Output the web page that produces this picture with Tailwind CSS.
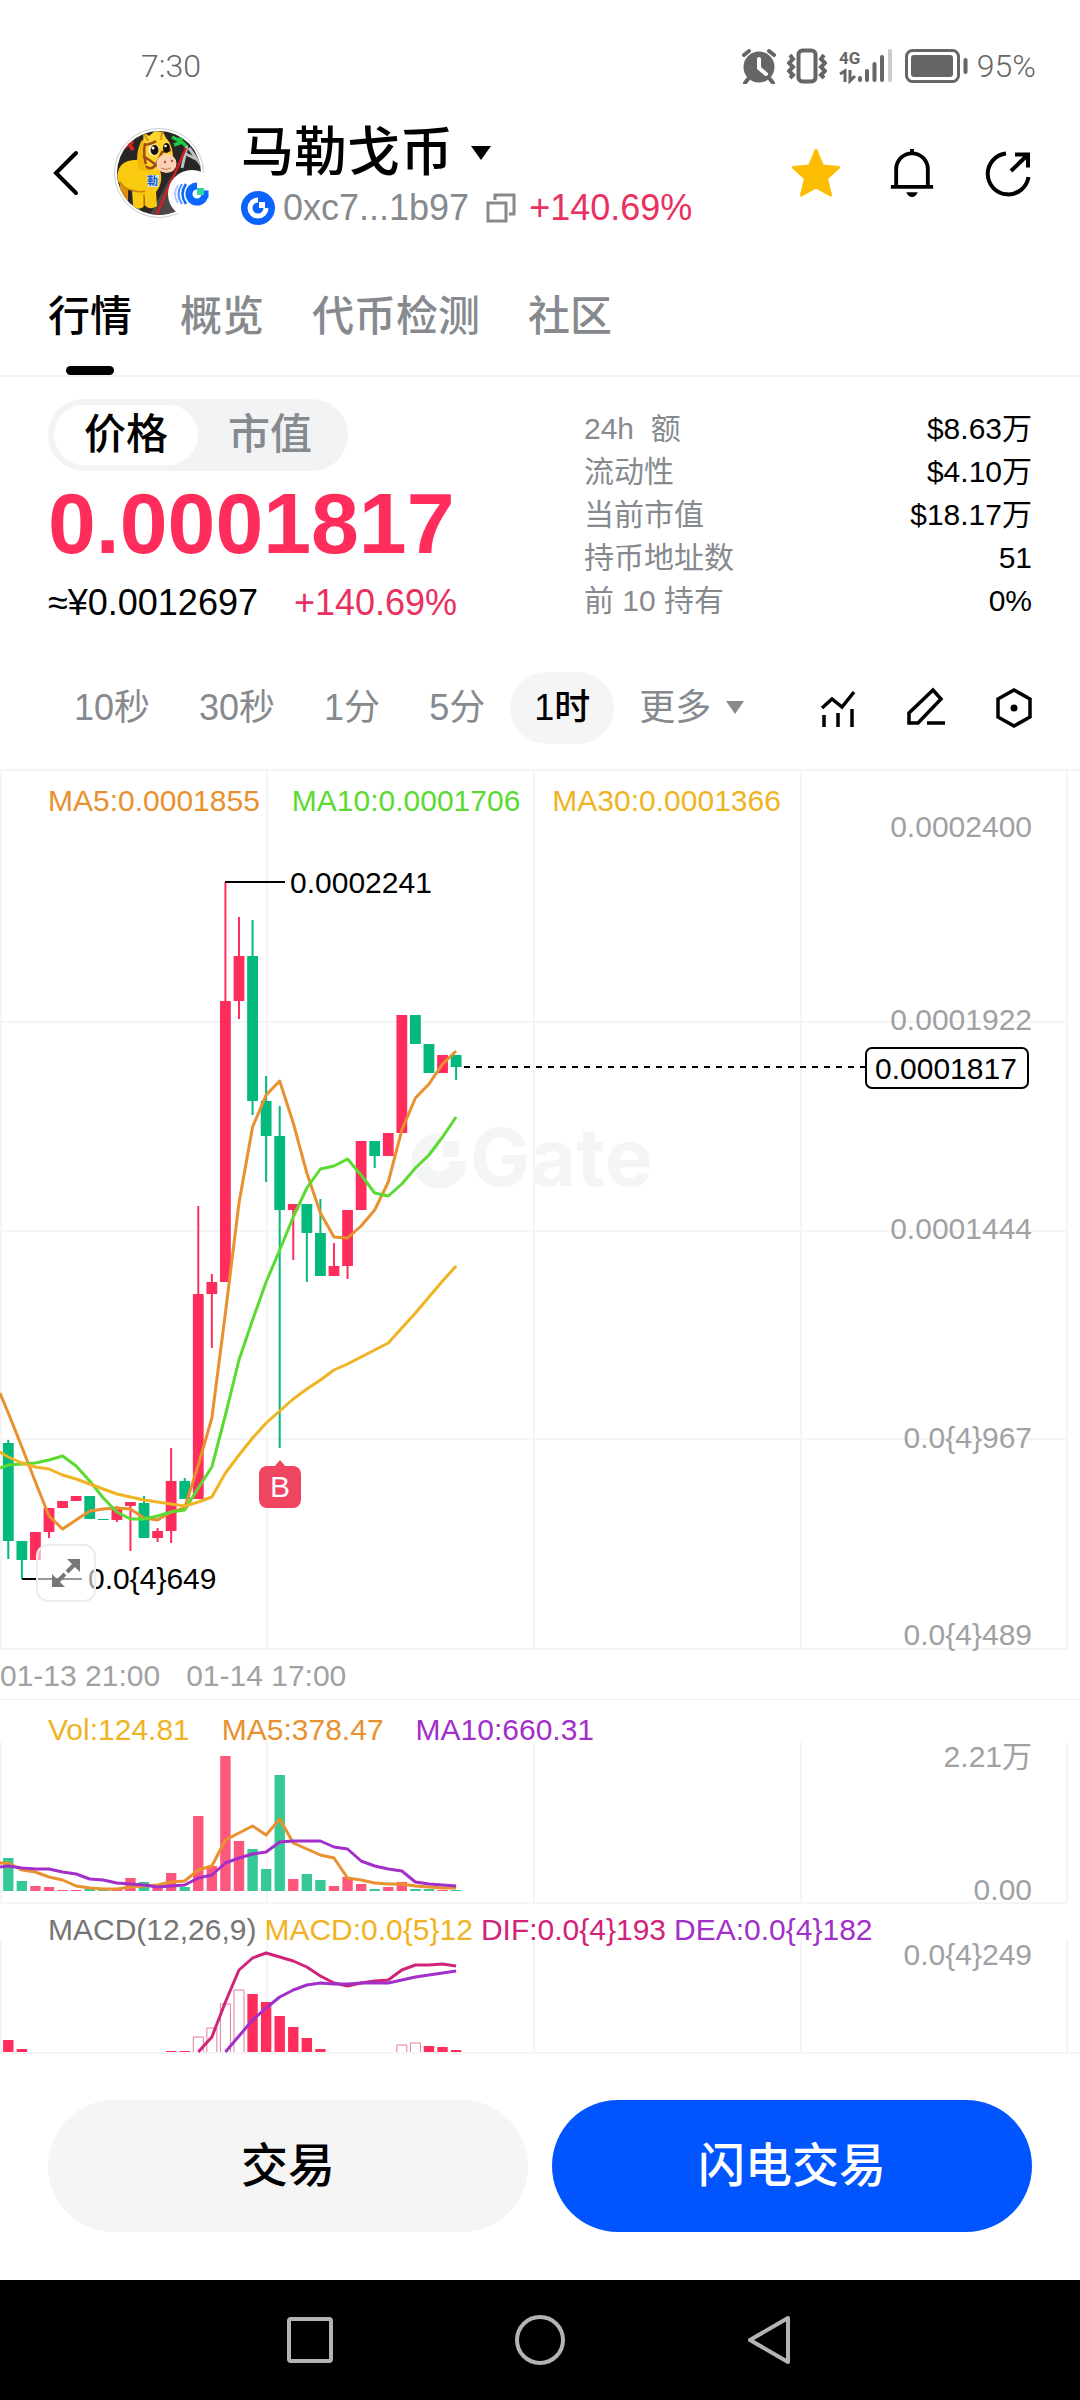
<!DOCTYPE html>
<html lang="zh-CN">

<head>
    <meta charset="UTF-8">
    <meta name="viewport" content="width=device-width, initial-scale=1.0">
    <title>马勒戈币 - 行情</title>
    <script src="https://cdn.jsdelivr.net/npm/@tailwindcss/browser@4"></script>
    <style>
        body {
            font-family: "Liberation Sans", "Noto Sans CJK SC", sans-serif;
        }
    </style>
</head>

<body class="bg-white text-black">
    <!-- Barra de estado -->
    <div class="flex h-[120px] items-center justify-between pt-3 pl-[141px] pr-11 text-[32px] font-light text-[#666] font-[Roboto]">
        <span>7:30</span>
        <div class="flex items-center">
            <svg class="h-9 w-9" viewBox="0 0 36 36" fill="none" stroke="#666" aria-hidden="true">
                <circle cx="18" cy="19" r="15.500" fill="#666" stroke="none" />
                <path d="M3 7l5-4M33 7l-5-4M7 31l-3 4M29 31l3 4" stroke-width="4" stroke-linecap="round" />
                <path d="M18 11v9l7 6" stroke="#fff" stroke-width="4" stroke-linecap="round" />
            </svg>
            <svg class="ml-2.5 h-9 w-10" viewBox="0 0 40 36" fill="none" stroke="#666" aria-hidden="true">
                <rect x="11.500" y="2.500" width="17" height="31" rx="4" stroke-width="4" />
                <path d="M3 7l3 4-4 4 4 4-4 4 4 4-3 3M37 7l-3 4 4 4-4 4 4 4-4 4 3 3" stroke-width="4" />
            </svg>
            <svg class="ml-3 h-9 w-[54px] overflow-visible" viewBox="0 0 54 36" aria-hidden="true">
                <text x="0" y="16" font-size="17" font-weight="700" fill="#666">4G</text>
                <path d="M1 26l5-3v11M11 22v11l5-5" fill="none" stroke="#666" stroke-width="3" />
                <g stroke="#666" stroke-width="4" stroke-linecap="round">
                    <path d="M21 30v2M28 23v9M35.500 16v16M43 9v23" />
                    <path d="M51 3v29" stroke="#ccc" />
                </g>
            </svg>
            <svg class="ml-3 h-9 w-16" viewBox="0 0 64 36" fill="none" stroke="#666" aria-hidden="true">
                <rect x="1.500" y="2.500" width="52" height="31" rx="6" stroke-width="3" />
                <rect x="6" y="7" width="42" height="22" rx="3" fill="#666" stroke="none" />
                <path d="M60.500 12v12" stroke-width="4" stroke-linecap="round" />
            </svg>
            <span class="ml-2">95%</span>
        </div>
    </div>

    <!-- Cabecera del token -->
    <header class="flex h-[110px] items-center px-12 pb-1">
        <button class="w-[66px]" aria-label="返回">
            <svg class="h-12 w-8" viewBox="0 0 32 48" fill="none" stroke="#000" stroke-width="4" stroke-linecap="round"><path d="M28 4L8 24l20 20" /></svg>
        </button>
        <svg class="h-24 w-24 shrink-0" viewBox="0 0 96 90" role="img" aria-label="马勒戈币">
            <defs><clipPath id="face"><circle cx="45" cy="45" r="42" /></clipPath></defs>
            <circle cx="45" cy="45" r="44.500" fill="#fff" stroke="#ccc" stroke-width="1" />
            <g clip-path="url(#face)">
                <rect width="96" height="90" fill="#2a2626" />
                <path d="M34 90L56 50l40-10v50z" fill="#4c4847" />
                <path d="M10 19l9-6M13 12l6 10" stroke="#d82626" stroke-width="4" fill="none" />
                <path d="M58 9l6 3 8-4M60 17l8-3 5 5" stroke="#20c840" stroke-width="3.500" fill="none" />
                <path d="M73 18l-5 22M75 20l13 18M72 26l12 6" fill="none" stroke="#b9c0c6" stroke-width="3" />
                <path d="M72 20L42 88" stroke="#d32020" stroke-width="2.500" />
                <path d="M8 54q-9 10-3 24l9 1V60z" fill="#dd8f12" />
                <path d="M4 44c2-10 12-13 24-12l18 10c3 10 0 17-4 22l1 14c-4 3-10 3-12-1v-8h-1v9c-3 4-9 3-11 0l-1-16C8 60 1 54 4 44z" fill="#f9ca10" />
                <path d="M30 78V66M17 62q8 3 14 1M6 54q5 8 12 8" stroke="#c9820e" stroke-width="1.500" fill="none" />
                <path d="M28 12c-5 8-7 22-2 30l10 2 4-26z" fill="#f0b90c" />
                <path d="M29 17c0-5 1-8 0-13l6 4 6-5 8 1 3 6c5 5 7 12 7 20l-7 10c-7 5-18 3-21-4z" fill="#fdd52c" />
                <path d="M29 4l5 9M48 4l-1 8" stroke="#d6930f" stroke-width="2" fill="none" />
                <path d="M30 17q8-1 12-4M31 15q-2 12 1 21M29 28q7 4 13 9l6-13 9-2M42 37q-6 6-10 1" stroke="#9c4c15" stroke-width="2.500" fill="none" />
                <ellipse cx="52.500" cy="35.500" rx="10" ry="9.500" fill="#fbd0b4" />
                <circle cx="51" cy="34" r="1.200" fill="#a6533b" /><circle cx="58" cy="33" r="1.200" fill="#a6533b" />
                <path d="M47 40q5 3 10 0" stroke="#c77a5e" fill="none" />
                <ellipse cx="40" cy="22" rx="5" ry="5.500" fill="#fff" /><ellipse cx="40.500" cy="22" rx="4" ry="5" fill="#181010" /><circle cx="39" cy="20" r="1.500" fill="#fff" />
                <ellipse cx="52.500" cy="20" rx="3.500" ry="5" fill="#181010" /><circle cx="51.500" cy="18" r="1.300" fill="#fff" />
                <path d="M33 47h12l-1 12H34z" fill="#cfe4f7" />
                <text x="33" y="57" font-size="11" font-weight="700" fill="#1459c9">勒</text>
            </g>
            <circle cx="78" cy="66" r="24" fill="#fff" />
            <path d="M83 58a8 8 0 1 0 8 8h3.500" fill="none" stroke="#0a66ff" stroke-width="7" />
            <rect x="83" y="60" width="7" height="7" fill="#2fd8a0" />
            <path d="M72 56q-7 10 0 20" fill="none" stroke="#0a66ff" stroke-width="2.500" />
            <path d="M68 56q-7 10 0 20" fill="none" stroke="#4b8eff" stroke-width="2" />
            <path d="M64 57q-6 9 0 18" fill="none" stroke="#a9c9ff" stroke-width="2" />
        </svg>
        <div class="ml-[31px] pt-2">
            <h1>
                <button class="flex items-center gap-4 text-[53px] leading-[62px] font-medium">
                    马勒戈币
                    <svg class="h-4 w-6" viewBox="0 0 24 16" aria-hidden="true"><path d="M2 1h20L12 15z" /></svg>
                </button>
            </h1>
            <div class="flex h-12 items-center text-[36px]">
                <svg class="h-[34px] w-[34px]" viewBox="0 0 34 34" aria-hidden="true">
                    <circle cx="17" cy="17" r="17" fill="#0a62ff" />
                    <path d="M17 9a8 8 0 1 0 8 8" fill="none" stroke="#fff" stroke-width="5" />
                    <rect x="18" y="11" width="6" height="6" fill="#fff" />
                </svg>
                <span class="ml-2 text-[#868a8e]">0xc7...1b97</span>
                <button class="ml-4" aria-label="复制">
                    <svg class="h-8 w-8" viewBox="0 0 32 32" fill="none" stroke="#868a8e" stroke-width="3"><path d="M3 11h18v18H3zM10 8V3h19v19h-5" /></svg>
                </button>
                <span class="ml-3 text-[#e9315f]">+140.69%</span>
            </div>
        </div>
        <div class="ml-auto flex gap-12">
            <button aria-label="收藏">
                <svg class="h-12 w-12" viewBox="0 0 48 48" fill="#fdbd02" stroke="#fdbd02" stroke-width="3" stroke-linejoin="round"><path d="M24 1.500l6.500 15.500 16 1.500-12 11 4 16.500L24 38 9.500 46l4-16.500-12-11 16-1.500z" /></svg>
            </button>
            <button aria-label="提醒">
                <svg class="h-12 w-12" viewBox="0 0 48 50" fill="none" stroke="#000" stroke-width="4"><path d="M24 0v5M7.500 39V21a16.500 16.500 0 0 1 33 0v18M2 39.500h44" /><path d="M18 45h12q-2 5-6 5t-6-5z" fill="#000" stroke="none" /></svg>
            </button>
            <button aria-label="分享">
                <svg class="h-12 w-12" viewBox="0 0 48 48" fill="none" stroke="#000" stroke-width="4"><path d="M22 4.500A20.500 20.500 0 1 0 44.500 28M31 5.500h13v13M43 6.500L27 22" /></svg>
            </button>
        </div>
    </header>

    <nav class="flex gap-12 border-b-2 border-[#f5f5f6] px-12 pt-[57px] text-[42px] leading-[60px] font-medium text-[#868a8e]">
        <a href="#" class="flex flex-col items-center text-black">行情<span class="mt-[19px] h-[9px] w-12 rounded-full bg-black"></span></a>
        <a href="#">概览</a>
        <a href="#">代币检测</a>
        <a href="#">社区</a>
    </nav>

    <main>
        <section class="flex items-start justify-between px-12 pt-[22px]">
            <div>
                <div class="inline-flex rounded-full bg-[#f2f3f5] p-1.5 text-[42px] leading-[60px] font-medium">
                    <button class="rounded-full bg-white px-[30px]">价格</button>
                    <button class="px-[30px] text-[#868a8e]">市值</button>
                </div>
                <p class="mt-1.5 text-[86px] leading-[92px] font-bold text-[#ff2d5c]">0.0001817</p>
                <p class="mt-3 flex gap-9 text-[36px] leading-[44px]"><span>≈¥0.0012697</span><span class="text-[#e9315f]">+140.69%</span></p>
            </div>
            <dl class="mt-2 grid w-[448px] grid-cols-[1fr_auto] text-[30px] leading-[43px]">
                <dt class="text-[#868a8e]">24h&nbsp; 额</dt><dd class="text-right">$8.63万</dd>
                <dt class="text-[#868a8e]">流动性</dt><dd class="text-right">$4.10万</dd>
                <dt class="text-[#868a8e]">当前市值</dt><dd class="text-right">$18.17万</dd>
                <dt class="text-[#868a8e]">持币地址数</dt><dd class="text-right">51</dd>
                <dt class="text-[#868a8e]">前 10 持有</dt><dd class="text-right">0%</dd>
            </dl>
        </section>

        <div class="mt-[47px] flex h-[72px] items-center gap-px pr-12 pl-[50px] text-[36px] text-[#868a8e]">
            <button class="h-full px-6">10秒</button>
            <button class="h-full px-6">30秒</button>
            <button class="h-full px-6">1分</button>
            <button class="h-full px-6">5分</button>
            <button class="h-full rounded-full bg-[#f5f5f5] px-6 font-medium text-black">1时</button>
            <button class="flex h-full items-center gap-3.5 pl-6">
                更多
                <svg class="h-3.5 w-5" viewBox="0 0 20 14" fill="#868a8e" aria-hidden="true"><path d="M1 0h18l-9 13z" /></svg>
            </button>
            <div class="ml-auto flex gap-[52px] text-black">
                <button aria-label="指标">
                    <svg class="h-10 w-9" viewBox="2 0 36 40" fill="none" stroke="#000" stroke-width="3.500"><path d="M4 20l10-9 10 8L36 4M6 27v12M20 25v14M34 21v18" /></svg>
                </button>
                <button aria-label="画线">
                    <svg class="h-10 w-9 overflow-visible" viewBox="2 0 36 40" fill="none" stroke="#000" stroke-width="3.500"><path d="M3 35V25L27 2l8 9-23 24zM21 35h18" /></svg>
                </button>
                <button aria-label="设置">
                    <svg class="h-10 w-9" viewBox="2 0 36 40" fill="none" stroke="#000" stroke-width="3.500"><path d="M20 2l16 9v18l-16 9-16-9V11z" /><circle cx="20" cy="20" r="3.500" fill="#000" stroke="none" /></svg>
                </button>
            </div>
        </div>

        <!-- Velas -->
        <div class="relative mt-[25px] text-[30px]">
            <svg class="h-auto w-full overflow-visible" viewBox="0 0 1080 881">
                <path d="M0 1H1080M0 253H1067M0 462H1067M0 670H1067M0 880H1067M1 1V880M267 1V880M534 1V880M801 1V880M1067 1V880" stroke="#f5f5f6" stroke-width="2" />
                <g fill="#f3f5f6">
                    <path d="M439 373a19 19 0 1 0 19 19" fill="none" stroke="#f3f5f6" stroke-width="17" />
                    <rect x="443" y="372" width="16" height="16" />
                    <text x="470" y="417" font-size="80" font-weight="700" font-family="Inter">Gate</text>
                </g>
                <g id="candles"></g>
                <path d="M225 113H285M22 810H82" stroke="#000" stroke-width="2" />
                <path d="M464 298H865" stroke="#000" stroke-width="2" stroke-dasharray="6 6" />
                <text x="290" y="124">0.0002241</text>
                <text x="88" y="820">0.0{4}649</text>
                <g fill="#9fa1a4" text-anchor="end">
                    <text x="1032" y="68">0.0002400</text>
                    <text x="1032" y="261">0.0001922</text>
                    <text x="1032" y="470">0.0001444</text>
                    <text x="1032" y="679">0.0{4}967</text>
                    <text x="1032" y="876">0.0{4}489</text>
                </g>
                <rect x="866" y="279" width="162" height="40" rx="6" fill="#fff" stroke="#000" stroke-width="2" />
                <text x="875" y="310">0.0001817</text>
                <path d="M274 698l6-7 6 7z" fill="#ef4560" />
                <rect x="259" y="697" width="42" height="42" rx="8" fill="#ef4560" />
                <text x="280" y="728" font-size="30" fill="#fff" text-anchor="middle">B</text>
            </svg>
            <div class="absolute top-4 left-12 flex gap-8 leading-8">
                <span class="text-[#e8912e]">MA5:0.0001855</span>
                <span class="text-[#5bda32]">MA10:0.0001706</span>
                <span class="text-[#f0b323]">MA30:0.0001366</span>
            </div>
            <button class="absolute bottom-12 left-9 flex h-[58px] w-[60px] items-center justify-center rounded-xl border-2 border-[#ededed] bg-white/60" aria-label="全屏">
                <svg class="h-7 w-7" viewBox="0 0 28 28" fill="#777" stroke="#777" stroke-width="4"><path d="M15 13l7-7M6 22l7-7" /><path d="M15 0h13v13zM0 15v13h13z" stroke="none" /></svg>
            </button>
        </div>
        <div class="flex h-[50px] items-center gap-[26px] border-b border-[#f0f0f1] pt-0.5 text-[30px] text-[#9fa1a4]">
            <span>01-13 21:00</span>
            <span>01-14 17:00</span>
        </div>

        <!-- Volumen -->
        <div class="relative text-[30px]">
            <svg class="h-auto w-full overflow-visible" viewBox="0 0 1080 204">
                <path d="M0 203H1067M1 42V203M267 42V203M534 42V203M801 42V203M1067 42V203" stroke="#f5f5f6" stroke-width="2" />
                <g id="volume"></g>
                <g fill="#9fa1a4" text-anchor="end">
                    <text x="1032" y="67">2.21万</text>
                    <text x="1032" y="200">0.00</text>
                </g>
            </svg>
            <div class="absolute top-3.5 left-12 flex gap-8 leading-8">
                <span class="text-[#f0b323]">Vol:124.81</span>
                <span class="text-[#e8912e]">MA5:378.47</span>
                <span class="text-[#a22fc9]">MA10:660.31</span>
            </div>
        </div>

        <!-- MACD -->
        <div class="relative text-[30px]">
            <svg class="h-auto w-full" viewBox="0 0 1080 150">
                <path d="M0 149H1080M1 36V149M267 36V149M534 36V149M801 36V149M1067 36V149" stroke="#f5f5f6" stroke-width="2" />
                <g id="macd"></g>
                <text x="1032" y="61" fill="#9fa1a4" text-anchor="end">0.0{4}249</text>
            </svg>
            <div class="absolute top-2.5 left-12 flex gap-2 leading-8">
                <span class="text-[#757575]">MACD(12,26,9)</span>
                <span class="text-[#f0b323]">MACD:0.0{5}12</span>
                <span class="text-[#cf2479]">DIF:0.0{4}193</span>
                <span class="text-[#a22fc9]">DEA:0.0{4}182</span>
            </div>
        </div>

        <div class="flex gap-6 px-12 pt-[46px] pb-12 text-[47px] font-medium">
            <button class="h-[132px] flex-1 rounded-full bg-[#f5f5f5]">交易</button>
            <button class="h-[132px] flex-1 rounded-full bg-[#0055ff] text-white">闪电交易</button>
        </div>
    </main>

    <footer class="flex h-[120px] items-center justify-center gap-[180px] bg-black">
        <button aria-label="最近任务"><svg class="h-[50px] w-[50px]" viewBox="0 0 50 50" fill="none" stroke="#b4b4b4" stroke-width="4"><rect x="4" y="4" width="42" height="42" rx="2" /></svg></button>
        <button aria-label="主页"><svg class="h-[50px] w-[50px]" viewBox="0 0 50 50" fill="none" stroke="#b4b4b4" stroke-width="4"><circle cx="25" cy="25" r="23" /></svg></button>
        <button aria-label="后退"><svg class="h-[50px] w-[50px]" viewBox="0 0 50 50" fill="none" stroke="#b4b4b4" stroke-width="4" stroke-linejoin="round"><path d="M43 3v44L5 25z" /></svg></button>
    </footer>

    <script>
        const ROJO = '#ff2d5c';
        const VERDE = '#04b97c';
        const posX = i => 8.3 + 13.57 * i;

        // [sube, máximo, arriba, abajo, mínimo]
        const velas = [
            [0, 671, 674, 772, 790], [0, 772, 772, 791, 810], [1, 763, 763, 791, 791], [1, 739, 739, 763, 769],
            [1, 732, 732, 739, 739], [1, 727, 727, 732, 732], [0, 727, 727, 750, 750], [0, 750, 750, 751, 751],
            [1, 737, 739, 751, 753], [1, 733, 733, 737, 782], [0, 727, 734, 769, 769], [1, 759, 762, 769, 773],
            [1, 679, 712, 762, 774], [0, 709, 712, 730, 730], [1, 437, 525, 730, 730], [1, 505, 513, 525, 579],
            [1, 113, 232, 513, 513], [1, 148, 187, 232, 250], [0, 151, 187, 332, 346], [0, 307, 332, 367, 413],
            [0, 337, 367, 441, 679], [1, 435, 435, 441, 491], [0, 435, 435, 464, 513], [0, 430, 464, 507, 507],
            [1, 474, 497, 507, 507], [1, 441, 441, 497, 510], [1, 372, 372, 441, 441], [0, 372, 372, 387, 399],
            [1, 364, 364, 387, 387], [1, 246, 246, 364, 364], [0, 246, 246, 275, 275], [0, 275, 275, 304, 304],
            [1, 286, 286, 304, 304], [0, 286, 286, 298, 311]
        ];
        const ma5 = [644, 678, 713, 747, 760, 751, 742, 740, 739, 740, 749, 751, 743, 739, 696, 649, 544, 434, 358, 326, 312, 354, 404, 444, 468, 469, 457, 441, 413, 361, 329, 315, 295, 282];
        const ma10 = [696, 695, 694, 691, 687, 697, 712, 729, 743, 750, 750, 747, 743, 741, 719, 698, 646, 591, 551, 513, 481, 448, 419, 400, 397, 390, 406, 424, 427, 415, 399, 386, 368, 348];
        const ma30 = [688, 694, 698, 700, 706, 710, 715, 720, 725, 728, 731, 733, 735, 737, 733, 728, 704, 686, 669, 654, 642, 630, 620, 611, 601, 595, 588, 581, 574, 559, 544, 528, 512, 497];

        const vol = [158, 181, 186, 187, 190, 190, 189, 190, 189, 178, 182, 186, 173, 187, 116, 166, 56, 141, 149, 169, 75, 179, 174, 180, 186, 177, 184, 189, 187, 182, 189, 189, 190, 190];
        const volMa5 = [163, 170, 172, 177, 180, 186, 188, 189, 189, 187, 186, 185, 182, 181, 170, 166, 140, 133, 126, 135, 119, 143, 149, 155, 158, 178, 180, 183, 184, 184, 186, 187, 188, 188];
        const volMa10 = [166, 168, 169, 169, 172, 174, 179, 180, 183, 184, 185, 187, 186, 185, 178, 175, 163, 158, 154, 152, 142, 141, 141, 141, 147, 149, 161, 166, 169, 171, 182, 184, 185, 186];

        // [índice, altura, relleno]
        const macd = [
            [0, 136, 1], [1, 145, 1], [12, 147, 1], [13, 147, 1], [14, 133, 0], [15, 124, 0], [16, 100, 0], [17, 86, 0],
            [18, 90, 1], [19, 98, 1], [20, 112, 1], [21, 123, 1], [22, 134, 1], [23, 145, 1], [29, 141, 0], [30, 139, 0],
            [31, 142, 1], [32, 143, 1], [33, 146, 1]
        ];
        const dif = [148, 133, 98, 66, 54, 49, 53, 57, 63, 72, 79, 82, 79, 77, 76, 66, 61, 61, 60, 62];
        const dea = [148, 132, 116, 104, 93, 86, 81, 79, 80, 80, 79, 79, 79, 76, 73, 71, 69, 67];

        function linea(valores, color, desde = 0, inicio = '') {
            const puntos = valores.map((y, i) => `${posX(i + desde)},${y}`).join(' ');
            return `<polyline points="${inicio} ${puntos}" fill="none" stroke="${color}" stroke-width="3" stroke-linejoin="round"/>`;
        }

        let html = '';
        velas.forEach(([sube, max, arriba, abajo, min], i) => {
            const color = sube ? ROJO : VERDE;
            html += `<rect x="${posX(i) - 1}" y="${max}" width="2" height="${min - max}" fill="${color}"/>`;
            html += `<rect x="${posX(i) - 5.4}" y="${arriba}" width="10.8" height="${abajo - arriba}" fill="${color}"/>`;
        });
        html += linea(ma5, '#e8912e', 0, '0,624') + linea(ma10, '#5bda32', 0, '0,699') + linea(ma30, '#f0b323', 0, '0,683');
        document.getElementById('candles').innerHTML = html;

        html = '';
        vol.forEach((y, i) => {
            html += `<rect x="${posX(i) - 5.2}" y="${y}" width="10.4" height="${191 - y}" fill="${velas[i][0] ? '#ff577c' : '#36c996'}"/>`;
        });
        html += linea(volMa5, '#e8912e', 0, '0,163') + linea(volMa10, '#a22fc9', 0, '0,167');
        document.getElementById('volume').innerHTML = html;

        html = '';
        macd.forEach(([i, y, relleno]) => {
            html += relleno
                ? `<rect x="${posX(i) - 5.2}" y="${y}" width="10.4" height="${148 - y}" fill="${ROJO}"/>`
                : `<path d="M${posX(i) - 5} 148V${y}h10V148" fill="#fff" stroke="#e0809c" stroke-width="1"/>`;
        });
        html += linea(dif, '#cf2479', 14) + linea(dea, '#a22fc9', 16);
        document.getElementById('macd').innerHTML = html;
    </script>
</body>

</html>
